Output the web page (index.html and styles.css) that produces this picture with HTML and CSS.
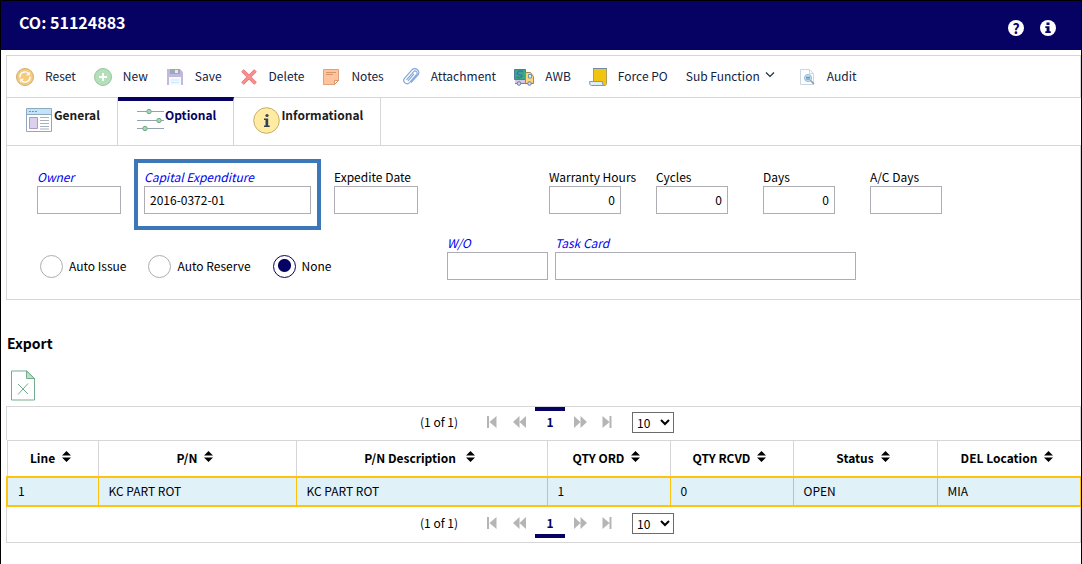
FILE: index.html
```html
<!DOCTYPE html>
<html lang="en">
<head>
    <meta charset="UTF-8">
    <meta name="viewport" content="width=device-width, initial-scale=1.0">
    <title>CO: 51124883</title>
    <link rel="stylesheet" href="styles.css">
</head>
<body>
    <header class="page-header">
        <h1>CO: 51124883</h1>
        <div class="header-actions">
            <button type="button" class="round-button" aria-label="Help">?</button>
            <button type="button" class="round-button info" aria-label="Information">
                <svg width="16" height="16" viewBox="0 0 16 16"><path d="M6.5 2.5h3v2.4h-3zM5.3 6.2h4.2v5h1.3v1.900H5.300v-1.900h1.300V8.100H5.300z" fill="#060263"/></svg>
            </button>
        </div>
    </header>

    <main>
        <!-- Toolbar -->
        <nav class="toolbar">
            <button type="button">
                <svg width="18" height="18" viewBox="0 0 18 18"><circle cx="9" cy="9" r="8.500" fill="#f5cb7d" stroke="#cfae78"/><path d="M4 9.500a5 5 0 0 1 8.600-4M14 8.500a5 5 0 0 1-8.600 4" fill="none" stroke="#fff" stroke-width="1.400"/><path d="M13.800 3.500v3.800H10zM4.200 14.500v-3.800H8z" fill="#fff"/></svg>
                Reset
            </button>
            <button type="button">
                <svg width="18" height="18" viewBox="0 0 18 18"><circle cx="9" cy="9" r="8.500" fill="#b3dfb9" stroke="#9ac5a2"/><path d="M9 5v8M5 9h8" stroke="#fff" stroke-width="2"/></svg>
                New
            </button>
            <button type="button">
                <svg width="18" height="18" viewBox="0 0 18 18"><path d="M1 1h13l3 3v13H1z" fill="#c5b8df"/><path d="M4 1h10v5H4z" fill="#9da8b8"/><path d="M9 2h3v3H9z" fill="#e4e9ee"/><path d="M3 9h12v8H3z" fill="#f2faff"/><path d="M5 12h8M5 14.500h8" stroke="#cfe6f5"/></svg>
                Save
            </button>
            <button type="button">
                <svg width="18" height="18" viewBox="0 0 18 18"><path d="M2.500 2.500l13 13M15.500 2.500l-13 13" stroke="#e87373" stroke-width="3.600"/><path d="M2.500 2.500l13 13M15.500 2.500l-13 13" stroke="#fa9090" stroke-width="2"/></svg>
                Delete
            </button>
            <button type="button">
                <svg width="18" height="18" viewBox="0 0 18 18"><path d="M1.500 1.500h15v11l-4 4h-11z" fill="#ffc49b" stroke="#e0a27c"/><path d="M16.500 12.500h-4v4z" fill="#fff0e3" stroke="#d99a73"/><path d="M4 4.500h10M4 6.500h7" stroke="#d9966c"/></svg>
                Notes
            </button>
            <button type="button">
                <svg width="18" height="18" viewBox="0 0 18 18"><path d="M4.500 11.800l7-8a2 2 0 0 1 3.200 2.600l-7.200 8.200a3.300 3.300 0 0 1-5-4.300l7.200-8.100a3.600 3.600 0 0 1 5.500-.6 3.600 3.600 0 0 1 .6 5.600L9 14.500M6 12.800l6-7" fill="none" stroke="#86a7d8" stroke-width="1.200"/></svg>
                Attachment
            </button>
            <button type="button">
                <svg width="20" height="18" viewBox="0 0 20 18"><path d="M.5 1.500h11v10H.5z" fill="#35ac7b" stroke="#52799a"/><path d="M9 3.500C6 2 2.500 4 3.500 6s5 0 4.500 2-4 2-5.500 1" fill="none" stroke="#426dc0" stroke-width="1.500"/><path d="M1 12h11v3H1z" fill="#d8c4e5"/><path d="M11.500 4.500h5l3 4v7h-8z" fill="#ffd27a" stroke="#a9835a"/><path d="M14.500 6.500h3v3.500h-3z" fill="#d7f1ff" stroke="#6999af"/><path d="M1 15.500h18" stroke="#877b91"/><circle cx="5" cy="15.500" r="1.800" fill="#c4e0f0" stroke="#687d98"/><circle cx="15.500" cy="15.500" r="1.800" fill="#c4e0f0" stroke="#687d98"/></svg>
                AWB
            </button>
            <button type="button">
                <svg width="18" height="18" viewBox="0 0 18 18"><path d="M4.500.5h13v15c0 1-1 2-2 2h-11z" fill="#f1c40f" stroke="#b19d52"/><path d="M4 .5h14" stroke="#6e8ca7"/><path d="M.5 13.500h13c-.5 2 .5 4 2 4h-13c-1.500 0-2-2-2-4z" fill="#dcecf9" stroke="#8199b1"/></svg>
                Force PO
            </button>
            <button type="button" class="has-menu">
                Sub Function
                <svg width="10" height="8" viewBox="0 0 10 8"><path d="M1 1.500l4 4 4-4" fill="none" stroke="#1c2b4a" stroke-width="1.200"/></svg>
            </button>
            <button type="button" class="audit">
                <svg width="18" height="18" viewBox="0 0 18 18"><path d="M2.500 1.500h9l4 4v11h-13z" fill="#fbfdff" stroke="#cbd6df"/><path d="M11.500 1.500v4h4" fill="none" stroke="#cbd6df"/><circle cx="10" cy="10" r="3.500" fill="#c9e6f7" stroke="#8fb4cf"/><path d="M8 9.300h4M8 11h4" stroke="#4f81ab"/><path d="M12.500 12.500l3.500 3.500" stroke="#7e9fbd" stroke-width="1.600"/></svg>
                Audit
            </button>
        </nav>

        <!-- Tabs -->
        <div class="tabs" role="tablist">
            <button type="button" class="tab" role="tab">
                <svg width="27" height="26" viewBox="0 0 27 26"><path d="M.5 1.500h25v23H.5z" fill="#fff" stroke="#91a7bb"/><path d="M1 2h24v5H1z" fill="#bfe4fb"/><path d="M.5 7.500h25" stroke="#91a7bb"/><path d="M3 4.500h8" stroke="#7095b9" stroke-dasharray="2 1"/><path d="M3.500 10.500h8v11h-8z" fill="#dcd0ef" stroke="#a99bc2"/><path d="M14 10.500h9M14 13.500h9M14 16.500h9M14 19.500h9M14 22h9" stroke="#a6b2be"/></svg>
                <span>General</span>
            </button>
            <button type="button" class="tab active" role="tab" aria-selected="true">
                <svg width="27" height="26" viewBox="0 0 27 26"><path d="M0 4.500h27M0 13.500h27M0 21.500h27" stroke="#94a2b2"/><g fill="#a2d8b4" stroke="#70a98a"><circle cx="12" cy="4.500" r="2.200"/><circle cx="22" cy="13.500" r="2.200"/><circle cx="8" cy="21.500" r="2.200"/></g></svg>
                <span>Optional</span>
            </button>
            <button type="button" class="tab" role="tab">
                <svg width="27" height="27" viewBox="0 0 27 27"><circle cx="13.500" cy="13.500" r="12.800" fill="#ffeca2" stroke="#c5ad68"/><circle cx="14" cy="8.500" r="1.600" fill="#354152"/><path d="M11 11.500h4.200v7h1.500v1.500H11v-1.500h1.500v-5.500H11z" fill="#354152"/></svg>
                <span>Informational</span>
            </button>
        </div>

        <!-- Optional tab -->
        <form class="panel">
            <div class="form-row first">
                <div class="left-fields">
                    <div class="field w-small">
                        <label class="lookup" for="owner">Owner</label>
                        <input type="text" id="owner">
                    </div>
                    <div class="field highlight">
                        <label class="lookup" for="capital">Capital Expenditure</label>
                        <input type="text" id="capital" value="2016-0372-01">
                    </div>
                    <div class="field w-small">
                        <label for="expedite">Expedite Date</label>
                        <input type="text" id="expedite">
                    </div>
                </div>
                <div class="warranty-fields">
                    <div class="field w-number">
                        <label for="hours">Warranty Hours</label>
                        <input type="text" id="hours" value="0">
                    </div>
                    <div class="field w-number">
                        <label for="cycles">Cycles</label>
                        <input type="text" id="cycles" value="0">
                    </div>
                    <div class="field w-number">
                        <label for="days">Days</label>
                        <input type="text" id="days" value="0">
                    </div>
                    <div class="field w-number">
                        <label for="acdays">A/C Days</label>
                        <input type="text" id="acdays">
                    </div>
                </div>
            </div>
            <div class="form-row second">
                <div class="radios">
                    <label><input type="radio" name="auto">Auto Issue</label>
                    <label><input type="radio" name="auto">Auto Reserve</label>
                    <label><input type="radio" name="auto" checked>None</label>
                </div>
                <div class="field w-wo">
                    <label class="lookup" for="wo">W/O</label>
                    <input type="text" id="wo">
                </div>
                <div class="field w-task">
                    <label class="lookup" for="task">Task Card</label>
                    <input type="text" id="task">
                </div>
            </div>
        </form>

        <!-- Export -->
        <h2>Export</h2>
        <button type="button" class="export-button" aria-label="Export to Excel">
            <svg width="24" height="31" viewBox="0 0 24 31"><path d="M.5 1h15.500l7.500 7.500v21.500H.5z" fill="#fff" stroke="#74ad8d"/><path d="M15.500 1v7.500h8z" fill="#b9e2c0" stroke="#74ad8d"/><path d="M7 14l10 10M17 13.500L7 24.500" stroke="#74ad8d"/></svg>
        </button>

        <div class="data-table">
            <div class="paginator top">
                <span>(1 of 1)</span>
                <div class="pages">
                    <button type="button" aria-label="First page"><svg width="10" height="12" viewBox="0 0 10 12"><path d="M0 0h2v12H0zM9.500 0v12L2.500 6z"/></svg></button>
                    <button type="button" aria-label="Previous page"><svg width="13" height="12" viewBox="0 0 13 12"><path d="M6.500 0v12L0 6zM13 0v12L6.500 6z"/></svg></button>
                    <button type="button" class="current">1</button>
                    <button type="button" aria-label="Next page"><svg width="13" height="12" viewBox="0 0 13 12"><path d="M0 0v12l6.500-6zM6.500 0v12L13 6z"/></svg></button>
                    <button type="button" aria-label="Last page"><svg width="10" height="12" viewBox="0 0 10 12"><path d="M7.500 0h2v12h-2zM.5 0v12l7-6z"/></svg></button>
                </div>
                <select aria-label="Rows per page"><option>10</option></select>
            </div>

            <table>
                <colgroup>
                    <col class="c-line"><col class="c-pn"><col class="c-desc"><col class="c-qty"><col class="c-qty"><col class="c-loc"><col class="c-loc">
                </colgroup>
                <thead>
                    <tr>
                        <th>Line<svg class="sort" width="9" height="11" viewBox="0 0 9 11"><path d="M0 4.500L4.500 0 9 4.500zM0 6.500h9L4.500 11z"/></svg></th>
                        <th>P/N<svg class="sort" width="9" height="11" viewBox="0 0 9 11"><path d="M0 4.500L4.500 0 9 4.500zM0 6.500h9L4.500 11z"/></svg></th>
                        <th>P/N Description <svg class="sort" width="9" height="11" viewBox="0 0 9 11"><path d="M0 4.500L4.500 0 9 4.500zM0 6.500h9L4.500 11z"/></svg></th>
                        <th>QTY ORD<svg class="sort" width="9" height="11" viewBox="0 0 9 11"><path d="M0 4.500L4.500 0 9 4.500zM0 6.500h9L4.500 11z"/></svg></th>
                        <th>QTY RCVD<svg class="sort" width="9" height="11" viewBox="0 0 9 11"><path d="M0 4.500L4.500 0 9 4.500zM0 6.500h9L4.500 11z"/></svg></th>
                        <th>Status<svg class="sort" width="9" height="11" viewBox="0 0 9 11"><path d="M0 4.500L4.500 0 9 4.500zM0 6.500h9L4.500 11z"/></svg></th>
                        <th>DEL Location<svg class="sort" width="9" height="11" viewBox="0 0 9 11"><path d="M0 4.500L4.500 0 9 4.500zM0 6.500h9L4.500 11z"/></svg></th>
                    </tr>
                </thead>
                <tbody>
                    <tr class="selected">
                        <td>1</td>
                        <td>KC PART ROT</td>
                        <td>KC PART ROT</td>
                        <td>1</td>
                        <td>0</td>
                        <td>OPEN</td>
                        <td>MIA</td>
                    </tr>
                </tbody>
            </table>

            <div class="paginator bottom">
                <span>(1 of 1)</span>
                <div class="pages">
                    <button type="button" aria-label="First page"><svg width="10" height="12" viewBox="0 0 10 12"><path d="M0 0h2v12H0zM9.500 0v12L2.500 6z"/></svg></button>
                    <button type="button" aria-label="Previous page"><svg width="13" height="12" viewBox="0 0 13 12"><path d="M6.500 0v12L0 6zM13 0v12L6.500 6z"/></svg></button>
                    <button type="button" class="current">1</button>
                    <button type="button" aria-label="Next page"><svg width="13" height="12" viewBox="0 0 13 12"><path d="M0 0v12l6.500-6zM6.500 0v12L13 6z"/></svg></button>
                    <button type="button" aria-label="Last page"><svg width="10" height="12" viewBox="0 0 10 12"><path d="M7.500 0h2v12h-2zM.5 0v12l7-6z"/></svg></button>
                </div>
                <select aria-label="Rows per page"><option>10</option></select>
            </div>
        </div>
    </main>
</body>
</html>
```

FILE: styles.css
```css
* {
    box-sizing: border-box;
}

body {
    margin: 0;
    min-height: 100vh;
    border: 1px solid #000;
    background-color: #fff;
    color: #000;
    font-family: "Noto Sans CJK JP", "Noto Sans", sans-serif;
    font-size: 12px;
    line-height: 16px;
}

button,
input,
select {
    font: inherit;
    color: inherit;
}

button {
    padding: 0;
    border: none;
    background: none;
    cursor: pointer;
}

svg {
    flex: none;
}

.page-header {
    display: flex;
    justify-content: space-between;
    height: 49px;
    padding: 11px 25px 0 18px;
    background-color: #060263;
    color: #fff;
}

h1 {
    margin: 0;
    font-size: 16px;
    line-height: 20px;
}

.header-actions {
    display: flex;
    gap: 16px;
    padding-top: 8px;
}

.round-button {
    display: flex;
    align-items: center;
    justify-content: center;
    width: 16px;
    height: 16px;
    border-radius: 50%;
    background-color: #fff;
    color: #060263;
    font-size: 14px;
    font-weight: bold;
}

main {
    padding: 5px 0 22px 5px;
}

.toolbar {
    display: flex;
    align-items: center;
    gap: 19px;
    height: 43px;
    padding: 0 9px;
    border: 1px solid #d6d6d6;
}

.toolbar button {
    display: flex;
    align-items: flex-start;
    gap: 11px;
    height: 18px;
    margin-right: -1px;
    color: #14233f;
    line-height: 15px;
    white-space: nowrap;
}

.toolbar .has-menu {
    align-items: center;
    gap: 5px;
    padding-bottom: 3px;
}

.toolbar .audit {
    margin-left: 5px;
}

.tabs {
    display: flex;
    height: 47px;
    border-left: 1px solid #d6d6d6;
}

.tab {
    display: flex;
    align-items: flex-start;
    gap: 1px;
    padding: 9px 17px 0 19px;
    border-right: 1px solid #d6d6d6;
    color: #1c1c1c;
    font-weight: bold;
}

.tab.active {
    margin-top: -1px;
    padding-top: 6px;
    border-top: 4px solid #060263;
    color: #060263;
}

.panel {
    padding: 13px 30px 19px;
    border: 1px solid #d6d6d6;
}

.form-row {
    display: flex;
}

.left-fields {
    display: flex;
    flex: 0 0 512px;
    gap: 13px;
}

.warranty-fields {
    display: flex;
    gap: 35px;
}

.field {
    display: flex;
    flex-direction: column;
}

.first .field {
    padding-top: 10px;
}

.field label {
    padding-bottom: 1px;
    white-space: nowrap;
}

.field input {
    width: 100%;
    height: 28px;
    padding: 0 5px 2px;
    border: 1px solid #adadb3;
    background-color: #fff;
}

.first .highlight {
    width: 187px;
    height: 71px;
    padding: 6px 6px 0;
    border: 4px solid #3c77b7;
}

.lookup {
    color: #0000ee;
    font-style: italic;
}

.w-small {
    width: 84px;
}

.w-number {
    width: 72px;
}

.w-number input {
    text-align: right;
}

.w-wo {
    width: 101px;
    margin-right: 7px;
}

.w-task {
    width: 301px;
}

.second {
    margin-top: 5px;
}

.radios {
    display: flex;
    flex: 0 0 410px;
    gap: 22px;
    padding: 20px 0 0 3px;
}

.radios label {
    display: flex;
    align-items: flex-start;
    gap: 6px;
    line-height: 21px;
}

.radios input {
    appearance: none;
    width: 23px;
    height: 23px;
    margin: 0;
    border: 1px solid #adadb3;
    border-radius: 50%;
}

.radios input:checked {
    border-color: #060263;
    background: radial-gradient(circle at 50% 45%, #060263 6px, #fff 7px);
}

h2 {
    margin: 33px 0 17px 1px;
    font-size: 14px;
    line-height: 20px;
}

.export-button {
    display: block;
    height: 31px;
    margin: 0 0 5px 5px;
}

.export-button svg {
    display: block;
}

.paginator {
    display: flex;
    justify-content: center;
    height: 34px;
    padding-left: 7px;
    border: 1px solid #d6d6d6;
    line-height: 30px;
}

.paginator.top {
    border-bottom: none;
}

.paginator.bottom {
    height: 36px;
    padding-top: 1px;
    border-top: none;
}

.pages {
    display: flex;
    margin: 0 11px 0 21px;
}

.pages button {
    display: flex;
    justify-content: center;
    width: 27px;
    padding-top: 9px;
}

.pages svg {
    fill: #b5b5b5;
}

.pages .current {
    width: 30px;
    margin: 0 2px;
    padding-top: 0;
    color: #060263;
    font-weight: bold;
}

.top .current {
    border-top: 4px solid #060263;
    line-height: 22px;
}

.bottom .current {
    height: 30px;
    border-bottom: 4px solid #060263;
}

.paginator select {
    width: 42px;
    height: 21px;
    margin-top: 5px;
    padding-bottom: 1px;
    border: 1px solid #6b6b6b;
    border-radius: 0;
    background-color: #fff;
    line-height: 16px;
}

table {
    width: 100%;
    border-collapse: collapse;
    table-layout: fixed;
}

.c-line {
    width: 91px;
}

.c-pn {
    width: 198px;
}

.c-desc {
    width: 251px;
}

.c-qty {
    width: 123px;
}

.c-loc {
    width: 144px;
}

th {
    height: 36px;
    padding: 0 4px 0 0;
    border: 1px solid #d6d6d6;
    white-space: nowrap;
}

.sort {
    margin-left: 7px;
    vertical-align: 1px;
}

td {
    height: 29px;
    padding: 0 10px 1px;
    border: 1px solid #ffc20e;
    border-width: 2px 1px;
}

.selected {
    border: 2px solid #ffc20e;
    background-color: #e0f1f8;
}
```
